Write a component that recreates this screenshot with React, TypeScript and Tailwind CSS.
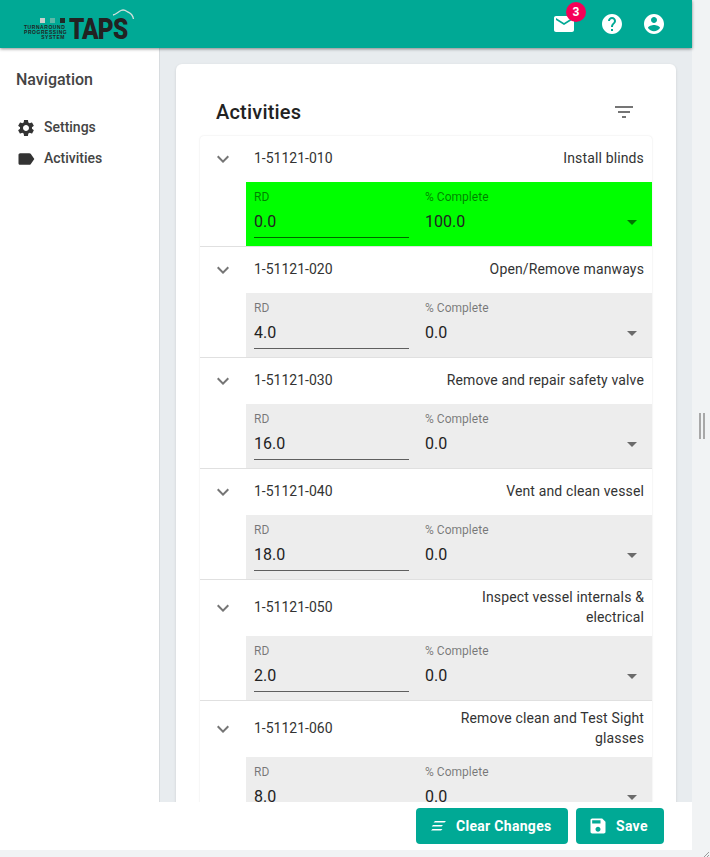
import React from "react";

const rows = [
  { id: "1-51121-010", name: ["Install blinds"], rd: "0.0", pc: "100.0", done: true },
  { id: "1-51121-020", name: ["Open/Remove manways"], rd: "4.0", pc: "0.0" },
  { id: "1-51121-030", name: ["Remove and repair safety valve"], rd: "16.0", pc: "0.0" },
  { id: "1-51121-040", name: ["Vent and clean vessel"], rd: "18.0", pc: "0.0" },
  { id: "1-51121-050", name: ["Inspect vessel internals &", "electrical"], rd: "2.0", pc: "0.0" },
  { id: "1-51121-060", name: ["Remove clean and Test Sight", "glasses"], rd: "8.0", pc: "0.0" },
];

function Icon({ d, className, fill = "currentColor" }: { d: string; className?: string; fill?: string }) {
  return (
    <svg viewBox="0 0 24 24" className={className} fill={fill}>
      <path d={d} />
    </svg>
  );
}

const MAIL = "M20 4H4c-1.1 0-1.99.9-1.99 2L2 18c0 1.1.9 2 2 2h16c1.1 0 2-.9 2-2V6c0-1.1-.9-2-2-2zm0 4l-8 5-8-5V6l8 5 8-5v2z";
const HELP = "M12 2C6.48 2 2 6.48 2 12s4.48 10 10 10 10-4.48 10-10S17.52 2 12 2zm1 17h-2v-2h2v2zm2.07-7.75l-.9.92C13.45 12.9 13 13.5 13 15h-2v-.5c0-1.1.45-2.1 1.17-2.83l1.24-1.26c.37-.36.59-.86.59-1.41 0-1.1-.9-2-2-2s-2 .9-2 2H8c0-2.21 1.79-4 4-4s4 1.79 4 4c0 .88-.36 1.68-.93 2.25z";
const ACCOUNT = "M12 2C6.48 2 2 6.48 2 12s4.48 10 10 10 10-4.48 10-10S17.52 2 12 2zm0 3c1.66 0 3 1.34 3 3s-1.34 3-3 3-3-1.34-3-3 1.34-3 3-3zm0 14.2c-2.5 0-4.71-1.28-6-3.22.03-1.99 4-3.08 6-3.08 1.99 0 5.97 1.09 6 3.08-1.29 1.94-3.5 3.22-6 3.22z";
const GEAR = "M19.14 12.94c.04-.3.06-.61.06-.94 0-.32-.02-.64-.07-.94l2.03-1.58c.18-.14.23-.41.12-.61l-1.92-3.32c-.12-.22-.37-.29-.59-.22l-2.39.96c-.5-.38-1.03-.7-1.62-.94l-.36-2.54c-.04-.24-.24-.41-.48-.41h-3.84c-.24 0-.43.17-.47.41l-.36 2.54c-.59.24-1.13.57-1.62.94l-2.39-.96c-.22-.08-.47 0-.59.22L2.74 8.87c-.12.21-.08.47.12.61l2.03 1.58c-.05.3-.09.63-.09.94s.02.64.07.94l-2.03 1.58c-.18.14-.23.41-.12.61l1.92 3.32c.12.22.37.29.59.22l2.39-.96c.5.38 1.03.7 1.62.94l.36 2.54c.05.24.24.41.48.41h3.84c.24 0 .44-.17.47-.41l.36-2.54c.59-.24 1.13-.56 1.62-.94l2.39.96c.22.08.47 0 .59-.22l1.92-3.32c.12-.22.07-.47-.12-.61l-2.01-1.58zM12 15.6c-1.98 0-3.6-1.62-3.6-3.6s1.62-3.6 3.6-3.6 3.6 1.62 3.6 3.6-1.62 3.6-3.6 3.6z";
const LABEL = "M17.63 5.84C17.27 5.33 16.67 5 16 5L5 5.01C3.9 5.01 3 5.9 3 7v10c0 1.1.9 1.99 2 1.99L16 19c.67 0 1.27-.33 1.63-.84L22 12l-4.37-6.16z";
const FILTER = "M10 18h4v-2h-4v2zM3 6v2h18V6H3zm3 7h12v-2H6v2z";
const CHEVRON = "M7.41 8.59L12 13.17l4.59-4.58L18 10l-6 6-6-6z";
const SAVE = "M17 3H5c-1.11 0-2 .9-2 2v14c0 1.1.89 2 2 2h14c1.1 0 2-.9 2-2V7l-4-4zm-5 16c-1.66 0-3-1.34-3-3s1.34-3 3-3 3 1.34 3 3-1.34 3-3 3zm3-10H5V5h10v4z";

function Logo() {
  return (
    <div className="relative w-[112px] h-[36px] ml-[24px] mt-[6px] shrink-0">
      <div className="absolute left-[16px] top-[12px] flex gap-[5px]">
        <span className="w-[5px] h-[5px] bg-[#c9cfcd]" />
        <span className="w-[5px] h-[5px] bg-[#5db8a8]" />
        <span className="w-[5px] h-[5px] bg-[#1f2a28]" />
      </div>
      <div className="absolute left-0 top-[19px] w-[41px] text-right text-[5px] leading-[5px] font-bold tracking-[0.55px] text-[#222] whitespace-pre font-['Liberation_Sans',sans-serif]">
        {"TURNAROUND\nPROGRESSING\nSYSTEM"}
      </div>
      <div className="absolute left-[45px] top-[8px] text-[29px] leading-[30px] font-black text-[#222] tracking-[-1px] scale-x-[0.84] origin-left">
        TAPS
      </div>
      <svg className="absolute left-[86px] top-[3px] w-[26px] h-[12px]" viewBox="0 0 26 12" fill="none">
        <path d="M3 6C6 5.500 8 3 11 1.500C13 .6 15 1 17 2.500C19 4 22.500 4 23.500 10" stroke="#cfe0dc" strokeWidth="1.300" />
      </svg>
    </div>
  );
}

function Row({ r }: { r: (typeof rows)[number] }) {
  const two = r.name.length > 1;
  return (
    <div className="border-b border-[#e0e0e0]">
      <div className={`flex items-center ${two ? "h-[56px]" : "h-[46px]"} pr-[8px]`}>
        <Icon d={CHEVRON} className="w-[24px] h-[24px] ml-[11px] text-[#757575] shrink-0" />
        <span className="ml-[19px] mb-[2px] text-[14px] text-[#333] shrink-0">{r.id}</span>
        <div className="ml-auto mb-[2px] text-right text-[14px] leading-[20px] text-[#333] tracking-[0.14px]">
          {r.name.map((n) => (
            <div key={n}>{n}</div>
          ))}
        </div>
      </div>
      <div className="pl-[46px]">
        <div className={`flex h-[64px] ${r.done ? "bg-[#00ff00]" : "bg-[#ededed]"}`}>
          <div className="w-[155px] ml-[8px] flex flex-col">
            <div className="text-[12px] leading-[14px] mt-[8px] text-black/50">RD</div>
            <div className="text-[16px] leading-[24px] mt-[6px] text-[#222] border-b border-black/60 h-[28px]">{r.rd}</div>
          </div>
          <div className="flex-1 ml-[16px] mr-[15px] flex flex-col">
            <div className="text-[12px] leading-[14px] mt-[8px] text-black/50 tracking-[0.03px]">% Complete</div>
            <div className="flex items-center justify-between mt-[6px] h-[24px]">
              <span className="text-[16px] leading-[24px] text-[#222]">{r.pc}</span>
              <span className="w-0 h-0 border-l-[5px] border-r-[5px] border-t-[5px] border-l-transparent border-r-transparent border-t-black/55" />
            </div>
          </div>
        </div>
      </div>
    </div>
  );
}

export default function App() {
  return (
    <div className="relative w-[710px] h-[857px] overflow-hidden bg-[#f1f3f4] font-['Roboto',sans-serif]">
      <div className="w-[692px] h-[850px] flex flex-col">
        <header className="h-[48px] shrink-0 bg-[#00a995] shadow-[0_1px_3px_rgba(0,0,0,0.45)] flex relative z-10">
          <Logo />
          <div className="ml-auto flex items-center relative">
            <div className="relative mr-[24px]">
              <Icon d={MAIL} className="w-[24px] h-[24px] text-white block" />
              <span className="absolute left-[14px] top-[-10px] w-[20px] h-[20px] rounded-full bg-[#f50057] text-white text-[12px] font-bold flex items-center justify-center">3</span>
            </div>
            <Icon d={HELP} className="w-[24px] h-[24px] text-white mr-[18px]" />
            <Icon d={ACCOUNT} className="w-[24px] h-[24px] text-white mr-[26px]" />
          </div>
        </header>
        <div className="flex-1 min-h-0 flex">
          <aside className="w-[160px] shrink-0 bg-white border-r border-[#d8dcdf]">
            <div className="mt-[22px] ml-[16px] text-[16px] leading-[20px] font-medium text-[#444]">Navigation</div>
            <div className="mt-[22px] ml-[16px] flex flex-col">
              <div className="flex items-center h-[31px]">
                <Icon d={GEAR} className="w-[20px] h-[20px] text-[#333]" />
                <span className="ml-[8px] text-[14px] font-medium text-[#444]">Settings</span>
              </div>
              <div className="flex items-center h-[31px]">
                <Icon d={LABEL} className="w-[20px] h-[20px] text-[#333]" />
                <span className="ml-[8px] text-[14px] font-medium text-[#444]">Activities</span>
              </div>
            </div>
          </aside>
          <main className="flex-1 min-w-0 bg-[#e8ecef] flex flex-col">
            <div className="flex-1 min-h-0 overflow-hidden pl-[16px] pt-[16px]">
              <div className="w-[500px] h-[900px] bg-white rounded-[6px] shadow-[0_1px_3px_rgba(0,0,0,0.12)] pt-[24px] px-[24px]">
                <div className="flex items-center justify-between h-[48px] pl-[16px] pr-[16px]">
                  <h1 className="text-[20px] font-medium text-[#222] tracking-[0.2px]">Activities</h1>
                  <Icon d={FILTER} className="w-[24px] h-[24px] text-[#757575]" />
                </div>
                <div className="rounded-t-[4px] shadow-[0_0_2px_rgba(0,0,0,0.12)] bg-white">
                  {rows.map((r) => (
                    <Row key={r.id} r={r} />
                  ))}
                </div>
              </div>
            </div>
          </main>
        </div>
        <footer className="h-[48px] shrink-0 bg-white flex items-center justify-end gap-[8px] pr-[28px] relative z-10">
          <button className="h-[36px] w-[152px] rounded-[4px] bg-[#00a995] text-white text-[14px] font-bold flex items-center pl-[15px] gap-[10px] tracking-[0.3px]">
            <svg viewBox="0 0 15 10" className="w-[15px] h-[10px]" fill="white">
              <path d="M4 0h11l-1.500 1.500H2.500zM2 4h10l-1.500 1.500H.7zM1.500 8h10L10 9.500H0z" />
            </svg>
            Clear Changes
          </button>
          <button className="h-[36px] w-[88px] rounded-[4px] bg-[#00a995] text-white text-[14px] font-bold flex items-center pl-[12px] gap-[8px] tracking-[0.3px]">
            <Icon d={SAVE} className="w-[20px] h-[20px]" />
            Save
          </button>
        </footer>
      </div>
      {/* panel resize grip */}
      <div className="absolute left-[699px] top-[413px] flex gap-[2px]">
        <span className="w-[2px] h-[26px] bg-[#a8a8a8]" />
        <span className="w-[2px] h-[26px] bg-[#a8a8a8]" />
      </div>
      <svg className="absolute left-[703px] top-[851px] w-[7px] h-[6px]" viewBox="0 0 7 6" fill="none">
        <path d="M1 6L6 1M4 6L6 4" stroke="#9a9a9a" strokeWidth="1" />
      </svg>
    </div>
  );
}
